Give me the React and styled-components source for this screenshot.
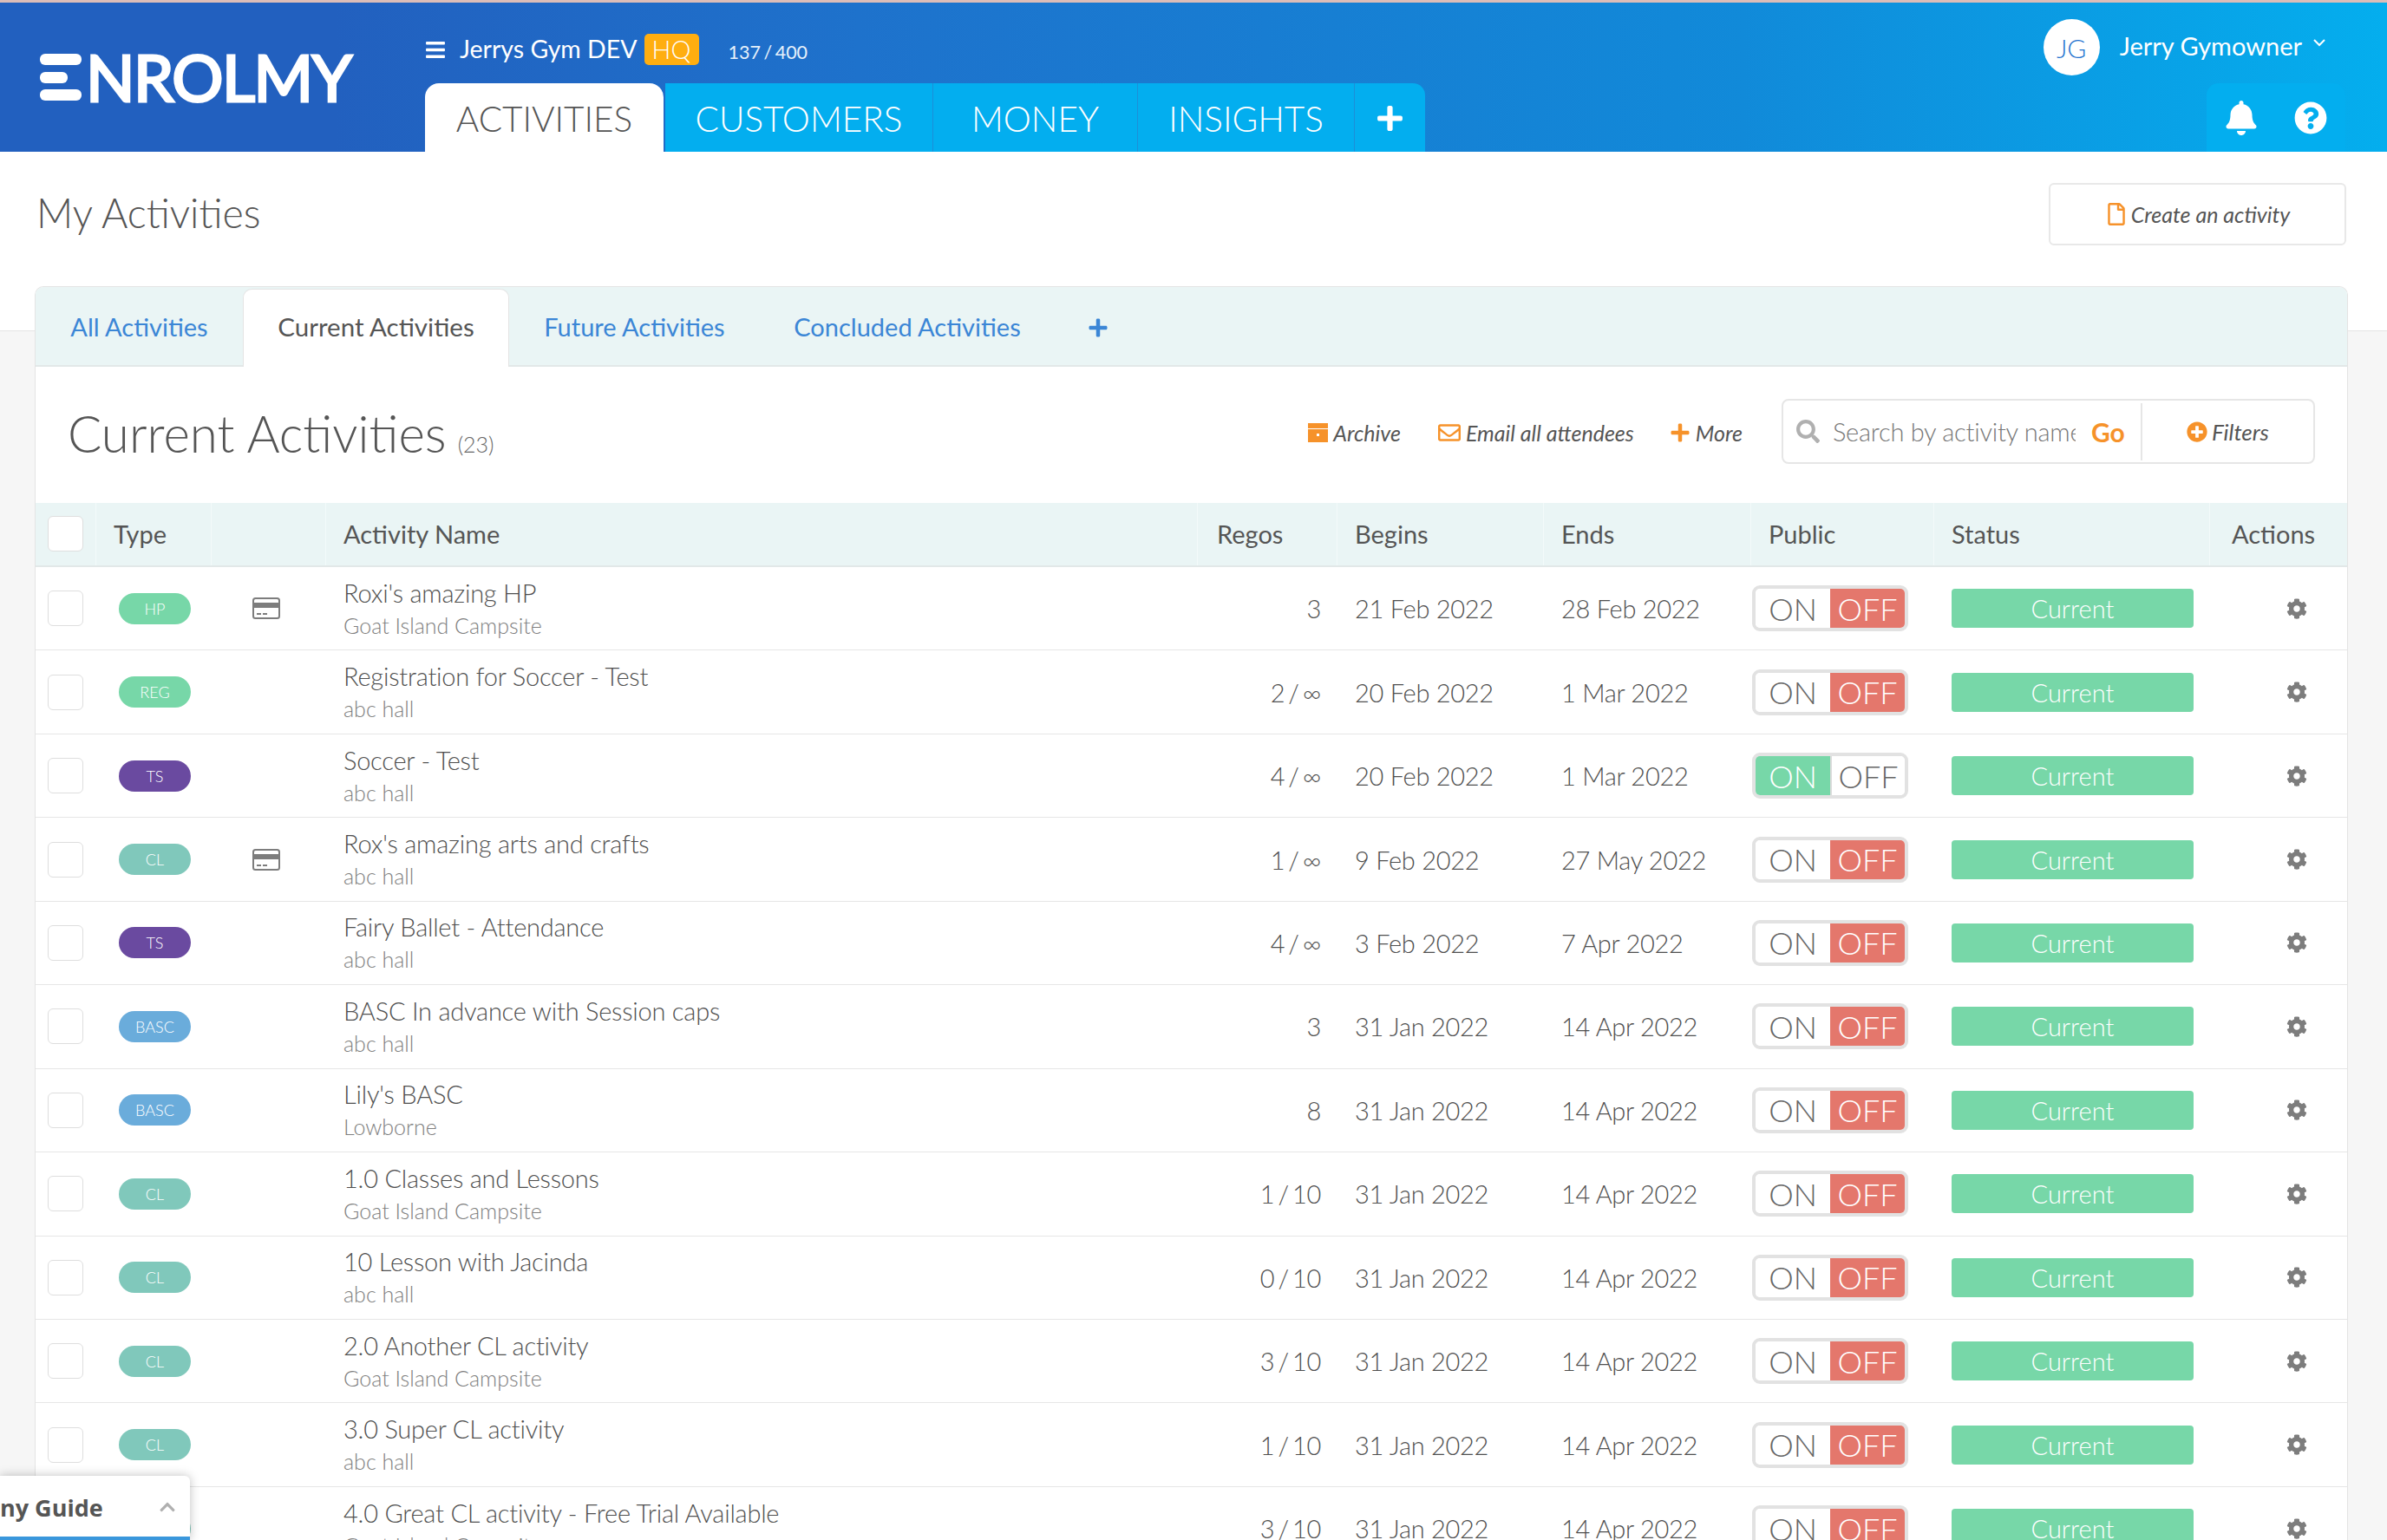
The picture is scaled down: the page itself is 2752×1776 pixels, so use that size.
import React from 'react';
import styled, { createGlobalStyle } from 'styled-components';
import { FaBars, FaBell, FaQuestionCircle, FaPlus, FaRegFile, FaRegEnvelope, FaSearch, FaPlusCircle, FaCog, FaChevronUp } from 'react-icons/fa';

const Global = createGlobalStyle`
  html, body { margin: 0; padding: 0; height: 1776px; overflow: hidden; background: #f6f6f6; }
  body { font-family: Lato, "Open Sans", "Liberation Sans", sans-serif; font-weight: 300; color: #4f4f4f; }
  * { box-sizing: border-box; }
`;

const COLS = '71px 133px 132px 1005px 161px 238px 239px 211px 318px 157px';

const Page = styled.div`width: 2752px; height: 1776px; overflow: hidden; position: relative; background: #f6f6f6;`;
const TopStrip = styled.div`height: 3px; background: #dcbdb8;`;
const Header = styled.header`
  height: 172px; display: flex;
  background: linear-gradient(90deg, #2260bf 0%, #2260bf 14%, #1e72cc 36%, #118ad9 73%, #04aeee 100%);
`;
const LogoBlock = styled.div`width: 490px; padding: 59px 0 0 46px; display: flex; align-items: flex-start; gap: 5px;`;
const LogoMark = styled.svg`width: 48px; height: 54px; flex: none;`;
const LogoWord = styled.span`
  font-size: 74px; line-height: 54px; font-weight: 400; color: #fff; letter-spacing: -1.5px;
  -webkit-text-stroke: 3px #fff; white-space: nowrap;
`;
const MainCol = styled.div`flex: 1; display: flex; flex-direction: column;`;
const OrgRow = styled.div`height: 93px; padding-top: 36px; display: flex; align-items: flex-start; color: #fff;`;
const OrgIcon = styled.span`display: flex; width: 24px; height: 36px; align-items: center; font-size: 25px; margin-right: 16px;`;
const OrgName = styled.span`font-size: 28.5px; line-height: 35px; font-weight: 400; margin-right: 8px;`;
const HQ = styled.span`
  width: 63px; height: 36px; border-radius: 5px; background: #ffae10; color: #fff;
  font-size: 29px; line-height: 36px; text-align: center;
`;
const OrgCount = styled.span`font-size: 21.5px; line-height: 42px; font-weight: 400; color: #e6f1fb; margin-left: 34px; word-spacing: -2px;`;
const Nav = styled.nav`display: flex; height: 79px;`;
const NavTab = styled.a`
  width: ${p => p.$w}px; display: flex; align-items: center; justify-content: center;
  font-size: 40.5px; padding-top: 2px; background: ${p => (p.$active ? '#fff' : '#03aeef')};
  color: ${p => (p.$active ? '#555' : '#fff')};
  border-radius: ${p => (p.$active ? '16px 16px 0 0' : p.$last ? '0 14px 0 0' : '0')};
  margin-right: ${p => (p.$gap ? 2 : 0)}px;
  border-right: ${p => (p.$sep ? '1px solid #1c8fd8' : 'none')};
`;
const RightCol = styled.div`width: 395px; display: flex; flex-direction: column; align-items: flex-end;`;
const UserRow = styled.div`height: 93px; padding: 19px 70px 0 0; display: flex; align-items: flex-start; color: #fff;`;
const Avatar = styled.span`
  width: 65px; height: 65px; flex: none; border-radius: 50%; background: #fff; color: #1f73cf;
  font-size: 30px; display: flex; align-items: center; justify-content: center; margin-right: 23px;
`;
const UserName = styled.span`font-size: 29px; line-height: 65px; font-weight: 400; white-space: nowrap; margin-top: -2px;`;
const UserChevron = styled.svg`width: 16px; height: 10px; margin: 22px 0 0 12px; flex: none;`;
const IconTabs = styled.div`display: flex; height: 79px; margin-right: 48px;`;
const IconTab = styled.a`
  width: 80px; background: #03aeef; display: flex; align-items: center; justify-content: center;
  font-size: ${p => (p.$first ? 40 : 38)}px; color: #fff;
  border-radius: ${p => (p.$first ? '14px 0 0 0' : '0 14px 0 0')};
`;

const TitleBand = styled.section`
  height: 207px; background: #fff; border-bottom: 1px solid #e5e5e5;
  display: flex; justify-content: space-between; align-items: flex-start;
  padding: 36px 47px 0 42px;
`;
const PageTitle = styled.h1`margin: -2px 0 0; font-size: 46.5px; font-weight: 300; line-height: 72px; color: #555;`;
const CreateButton = styled.a`
  width: 343px; height: 72px; border: 2px solid #e8e8e8; border-radius: 6px; background: #fff;
  display: flex; align-items: center; justify-content: center; gap: 4px;
  font-size: 25px; font-style: italic; font-weight: 400; color: #555;
`;
const Orange = styled.span`display: inline-flex; color: #f6922a; font-size: ${p => p.$s || 24}px;`;

const Card = styled.section`
  margin: -52px 45px 0 40px; background: #fff; height: 1500px;
  border: 1px solid #e4e4e4; border-bottom: 0; border-radius: 10px 10px 0 0; position: relative;
  overflow: hidden;
`;
const TabBar = styled.div`
  height: 92px; background: #eaf5f5; border-bottom: 2px solid #e2e8e8;
  display: flex; align-items: stretch;
`;
const Tab = styled.a`
  width: ${p => p.$w}px; display: flex; align-items: center; justify-content: center;
  font-size: ${p => (p.$active ? 29.5 : 29)}px; font-weight: 400; margin-bottom: -2px; padding-bottom: ${p => (p.$active ? 5 : 2)}px;
  color: ${p => (p.$active ? '#555' : '#3b86d6')};
  background: ${p => (p.$active ? '#fff' : 'transparent')};
  border-radius: ${p => (p.$active ? '10px 10px 0 0' : '0')};
  ${p => p.$active && 'margin-top: 2px; border: 1px solid #e4e4e4; border-bottom: none;'}
`;
const TabPlus = styled.span`display: flex; align-items: center; margin: 3px 0 0 38px; color: #3b86d6; font-size: 24px;`;

const ListHead = styled.div`height: 157px; display: flex; align-items: center; padding-left: 37px;`;
const ListTitle = styled.h2`margin: 7px 0 0; font-size: 58.3px; font-weight: 300; color: #555; line-height: 80px;`;
const ListCount = styled.small`font-size: 25px; margin-left: 13px; color: #666;`;
const ActionGroup = styled.div`margin: -8px 37px 0 auto; display: flex; align-items: center;`;
const ActionLink = styled.a`
  display: flex; align-items: center; gap: 6px; font-size: 25px; font-style: italic; font-weight: 400;
  color: #555; margin-right: ${p => p.$mr}px; margin-top: 3px;
`;
const SearchBox = styled.div`
  width: 615px; height: 75px; border: 2px solid #e6e6e6; border-radius: 8px; display: flex; align-items: center;
`;
const SearchLeft = styled.div`
  width: 412px; height: 100%; display: flex; align-items: center; padding-left: 15px; position: relative;
`;
const SearchIcon = styled.span`display: flex; color: #b0b0b0; font-size: 27px; margin-right: 15px;`;
const SearchText = styled.span`
  font-size: 29px; letter-spacing: -0.25px; color: #777; width: 280px; overflow: hidden; white-space: nowrap;
`;
const GoLabel = styled.span`font-size: 30px; font-weight: 700; color: #f6922a; margin-left: 18px;`;
const FilterCell = styled.div`
  flex: 1; height: 66px; border-left: 2px solid #e6e6e6; display: flex; align-items: center; justify-content: center;
  gap: 5px; font-size: 26px; font-style: italic; font-weight: 400; color: #555;
`;

const HeadRow = styled.div`
  display: grid; grid-template-columns: ${COLS}; height: 74px; background: #eaf5f5;
  border-bottom: 2px solid #e2e8e8; margin-left: -1px; width: 2666px;
`;
const HeadCell = styled.div`
  display: flex; align-items: center; padding: 0 0 2px ${p => p.$pl || 20}px; font-size: 29px; font-weight: 400; color: #555;
  border-right: ${p => (p.$last ? 'none' : '1px solid #f3fafa')};
`;
const HeadCheck = styled.span`
  display: block; width: 41px; height: 41px; margin-left: -5px; border: 1px solid #dedede; border-radius: 6px; background: #fff;
`;
const CheckBox = styled(HeadCheck)`margin-left: 0;`;
const Row = styled.div`
  display: grid; grid-template-columns: ${COLS}; height: 96.45px; border-bottom: 1px solid #e6e6e6; margin-left: -1px;
  width: 2666px;
`;
const Cell = styled.div`
  display: flex; align-items: center; justify-content: ${p => p.$j || 'flex-start'};
  padding: ${p => p.$p || '0'};
  font-size: 29px; color: #4f4f4f; letter-spacing: -0.28px;
`;
const RegoCell = styled(Cell)`word-spacing: -3.5px;`;
const Badge = styled.span`
  width: 83px; height: 36px; border-radius: 18px; background: ${p => p.$c}; color: #fff; font-size: 18px;
  font-weight: 300; letter-spacing: 0; display: flex; align-items: center; justify-content: center;
`;
const NameStack = styled.div`display: flex; flex-direction: column;`;
const Name = styled.span`font-size: 29px; line-height: 38px; letter-spacing: -0.22px;`;
const Venue = styled.span`font-size: 25px; line-height: 36px; color: #808080; letter-spacing: 0;`;
const Toggle = styled.div`
  width: 180px; height: 53px; border: 4px solid #e2e2e2; border-radius: 9px; display: grid; grid-template-columns: 1fr 1fr;
  overflow: hidden; background: #fff; letter-spacing: 0;
`;
const ToggleSide = styled.span`
  display: flex; align-items: center; justify-content: center; font-size: 36px;
  color: ${p => (p.$bg ? '#fff' : '#666')}; background: ${p => p.$bg || '#fff'};
  border-left: ${p => (p.$rule ? '2px solid #dcdcdc' : 'none')};
`;
const Status = styled.span`
  width: 279px; height: 45px; border-radius: 4px; background: #77d7a8; color: #fff; font-size: 29px;
  letter-spacing: 0; display: flex; align-items: center; justify-content: center;
`;
const Gear = styled.span`display: flex; color: #7d7d7d; font-size: 24px;`;
const CardGlyph = styled.svg`width: 32px; height: 25px;`;

const GuideWidget = styled.aside`
  position: absolute; left: 0; bottom: 0; width: 219px; height: 74px; background: #fff;
  border-radius: 0 6px 0 0; box-shadow: 0 0 12px rgba(0,0,0,.25); border-bottom: 4px solid #3a97dc;
  display: flex; align-items: center; justify-content: space-between; padding: 2px 16px 0 0;
`;
const GuideLabel = styled.span`
  font-family: "Open Sans", sans-serif; font-weight: 700; font-size: 27px; color: #555; white-space: nowrap;
`;
const GuideChevron = styled.span`display: flex; color: #b0b0b0; font-size: 20px;`;

const Logo = () => (
  <LogoMark viewBox="0 0 48 54">
    <rect x="0" y="0" width="48" height="13" rx="6" fill="#fff" />
    <rect x="0" y="21" width="32" height="13" rx="6" fill="#fff" />
    <rect x="0" y="41" width="48" height="13" rx="6" fill="#fff" />
  </LogoMark>
);
const PayCard = () => (
  <CardGlyph viewBox="0 0 32 25">
    <rect x="1" y="1" width="30" height="23" rx="2.5" fill="#fff" stroke="#7d7d7d" strokeWidth="2" />
    <rect x="1" y="6" width="30" height="6" fill="#7d7d7d" />
    <rect x="5" y="18" width="5" height="2" fill="#7d7d7d" />
    <rect x="12" y="18" width="5" height="2" fill="#7d7d7d" />
  </CardGlyph>
);
const ArchiveIcon = () => (
  <svg width="23" height="22" viewBox="0 0 23 22">
    <rect x="0" y="0" width="23" height="6" fill="#f6922a" />
    <rect x="0" y="7" width="23" height="15" fill="#f6922a" />
    <rect x="10" y="12" width="3" height="3" fill="#fff" />
  </svg>
);

const G = '#77d7a8', TS = '#6a4aa0', CL = '#80c8bb', B = '#6aacdb';
const rows = [
  ['HP', G, true, "Roxi's amazing HP", 'Goat Island Campsite', '3', '21 Feb 2022', '28 Feb 2022'],
  ['REG', G, false, 'Registration for Soccer - Test', 'abc hall', '2 / ∞', '20 Feb 2022', '1 Mar 2022'],
  ['TS', TS, false, 'Soccer - Test', 'abc hall', '4 / ∞', '20 Feb 2022', '1 Mar 2022', true],
  ['CL', CL, true, "Rox's amazing arts and crafts", 'abc hall', '1 / ∞', '9 Feb 2022', '27 May 2022'],
  ['TS', TS, false, 'Fairy Ballet - Attendance', 'abc hall', '4 / ∞', '3 Feb 2022', '7 Apr 2022'],
  ['BASC', B, false, 'BASC In advance with Session caps', 'abc hall', '3', '31 Jan 2022', '14 Apr 2022'],
  ['BASC', B, false, "Lily's BASC", 'Lowborne', '8', '31 Jan 2022', '14 Apr 2022'],
  ['CL', CL, false, '1.0 Classes and Lessons', 'Goat Island Campsite', '1 / 10', '31 Jan 2022', '14 Apr 2022'],
  ['CL', CL, false, '10 Lesson with Jacinda', 'abc hall', '0 / 10', '31 Jan 2022', '14 Apr 2022'],
  ['CL', CL, false, '2.0 Another CL activity', 'Goat Island Campsite', '3 / 10', '31 Jan 2022', '14 Apr 2022'],
  ['CL', CL, false, '3.0 Super CL activity', 'abc hall', '1 / 10', '31 Jan 2022', '14 Apr 2022'],
  ['CL', CL, false, '4.0 Great CL activity - Free Trial Available', 'Goat Island Campsite', '3 / 10', '31 Jan 2022', '14 Apr 2022'],
];

export default function App() {
  return (
    <Page>
      <Global />
      <TopStrip />
      <Header>
        <LogoBlock><Logo /><LogoWord>NROLMY</LogoWord></LogoBlock>
        <MainCol>
          <OrgRow>
            <OrgIcon><FaBars /></OrgIcon>
            <OrgName>Jerrys Gym DEV</OrgName>
            <HQ>HQ</HQ>
            <OrgCount>137 / 400</OrgCount>
          </OrgRow>
          <Nav>
            <NavTab $active $w={275} $gap>ACTIVITIES</NavTab>
            <NavTab $w={309} $sep>CUSTOMERS</NavTab>
            <NavTab $w={236} $sep>MONEY</NavTab>
            <NavTab $w={250} $sep>INSIGHTS</NavTab>
            <NavTab $w={81} $last><FaPlus size={33} /></NavTab>
          </Nav>
        </MainCol>
        <RightCol>
          <UserRow>
            <Avatar>JG</Avatar>
            <UserName>Jerry Gymowner</UserName>
            <UserChevron viewBox="0 0 16 10"><path d="M2 2l6 6 6-6" fill="none" stroke="#fff" strokeWidth="2" /></UserChevron>
          </UserRow>
          <IconTabs>
            <IconTab $first><FaBell /></IconTab>
            <IconTab><FaQuestionCircle /></IconTab>
          </IconTabs>
        </RightCol>
      </Header>
      <TitleBand>
        <PageTitle>My Activities</PageTitle>
        <CreateButton><Orange $s={26}><FaRegFile /></Orange>Create an activity</CreateButton>
      </TitleBand>
      <Card>
        <TabBar>
          <Tab $w={239}>All Activities</Tab>
          <Tab $w={307} $active>Current Activities</Tab>
          <Tab $w={289}>Future Activities</Tab>
          <Tab $w={340}>Concluded Activities</Tab>
          <TabPlus><FaPlus /></TabPlus>
        </TabBar>
        <ListHead>
          <ListTitle>Current Activities<ListCount>(23)</ListCount></ListTitle>
          <ActionGroup>
            <ActionLink $mr={43}><ArchiveIcon />Archive</ActionLink>
            <ActionLink $mr={41}><Orange $s={26}><FaRegEnvelope /></Orange>Email all attendees</ActionLink>
            <ActionLink $mr={45}><Orange><FaPlus /></Orange>More</ActionLink>
            <SearchBox>
              <SearchLeft>
                <SearchIcon><FaSearch /></SearchIcon>
                <SearchText>Search by activity name</SearchText>
                <GoLabel>Go</GoLabel>
              </SearchLeft>
              <FilterCell><Orange><FaPlusCircle /></Orange>Filters</FilterCell>
            </SearchBox>
          </ActionGroup>
        </ListHead>
        <HeadRow>
          <HeadCell><HeadCheck /></HeadCell>
          <HeadCell>Type</HeadCell>
          <HeadCell />
          <HeadCell>Activity Name</HeadCell>
          <HeadCell $pl={22}>Regos</HeadCell>
          <HeadCell>Begins</HeadCell>
          <HeadCell>Ends</HeadCell>
          <HeadCell>Public</HeadCell>
          <HeadCell>Status</HeadCell>
          <HeadCell $last $pl={25}>Actions</HeadCell>
        </HeadRow>
        {rows.map((r, i) => (
          <Row key={i}>
            <Cell $p="0 0 0 15px"><CheckBox /></Cell>
            <Cell $p="0 0 0 26px"><Badge $c={r[1]}>{r[0]}</Badge></Cell>
            <Cell $j="center" $p="0 6px 0 0">{r[2] && <PayCard />}</Cell>
            <Cell $p="0 0 0 20px"><NameStack><Name>{r[3]}</Name><Venue>{r[4]}</Venue></NameStack></Cell>
            <RegoCell $j="flex-end" $p="0 19px 0 0">{r[5]}</RegoCell>
            <Cell $p="0 0 0 20px">{r[6]}</Cell>
            <Cell $p="0 0 0 20px">{r[7]}</Cell>
            <Cell $p="0 0 0 1px">
              <Toggle>
                <ToggleSide $bg={r[8] ? G : undefined}>ON</ToggleSide>
                <ToggleSide $rule={r[8]} $bg={r[8] ? undefined : '#e4776c'}>OFF</ToggleSide>
              </Toggle>
            </Cell>
            <Cell $p="0 0 0 20px"><Status>Current</Status></Cell>
            <Cell $j="center" $p="0 0 0 42px"><Gear><FaCog /></Gear></Cell>
          </Row>
        ))}
      </Card>
      <GuideWidget>
        <GuideLabel>ny Guide</GuideLabel>
        <GuideChevron><FaChevronUp /></GuideChevron>
      </GuideWidget>
    </Page>
  );
}
